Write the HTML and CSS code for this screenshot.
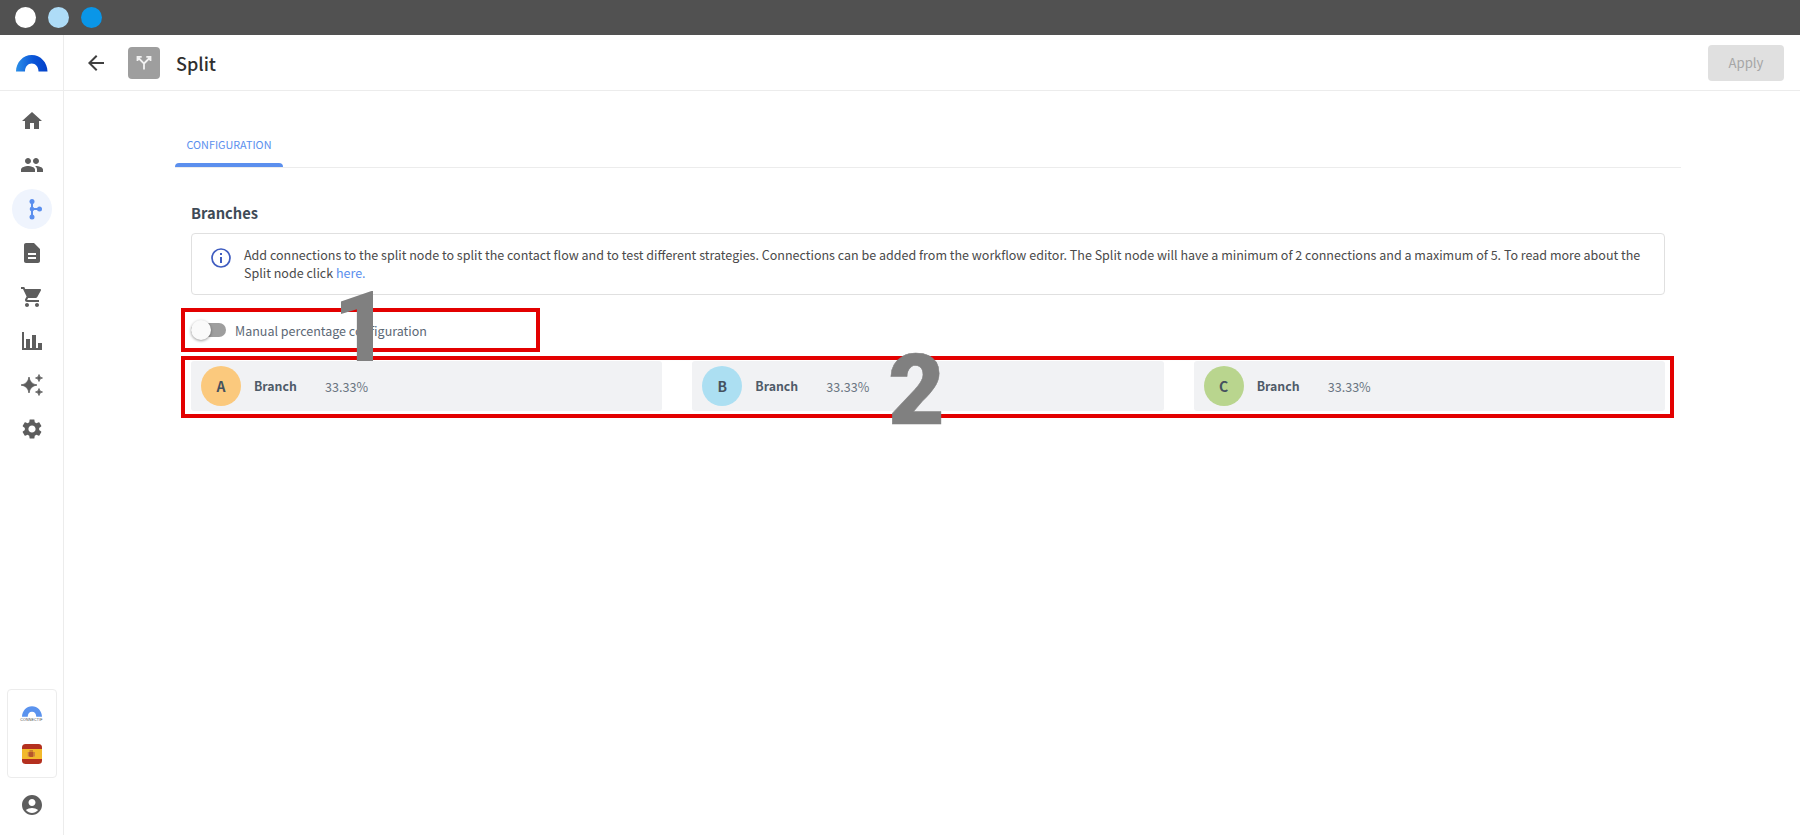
FILE: index.html
```html
<!DOCTYPE html>
<html lang="en">
<head>
<meta charset="utf-8">
<title>Split</title>
<link rel="stylesheet" href="styles.css">
</head>
<body>
<div class="titlebar">
  <span class="dot dot-white"></span>
  <span class="dot dot-light"></span>
  <span class="dot dot-blue"></span>
</div>
<div class="app">
  <aside class="sidebar">
    <div class="logo-cell">
      <svg class="logo" width="32" height="17" viewBox="0 0 32 17">
        <defs><linearGradient id="lg" x1="0" x2="1" y1="0" y2="0"><stop offset="0" stop-color="#2b8fe8"/><stop offset="0.55" stop-color="#0a55d8"/><stop offset="1" stop-color="#0340c8"/></linearGradient></defs>
        <path fill="url(#lg)" d="M0 16.500C0 7.500 7 0 15.750 0S31.500 7.500 31.500 16.500H22.500C22.500 11.500 19.500 8.500 15.750 8.500S9 11.500 9 16.500Z"/>
      </svg>
    </div>
    <nav class="nav">
      <a class="nav-item"><svg class="ico" viewBox="0 0 24 24"><path d="M10 20v-6h4v6h5v-8h3L12 3 2 12h3v8z"/></svg></a>
      <a class="nav-item"><svg class="ico" viewBox="0 0 24 24"><path d="M16 11c1.66 0 2.99-1.34 2.99-3S17.66 5 16 5c-1.66 0-3 1.34-3 3s1.34 3 3 3zm-8 0c1.66 0 2.99-1.34 2.99-3S9.66 5 8 5C6.34 5 5 6.34 5 8s1.34 3 3 3zm0 2c-2.33 0-7 1.17-7 3.5V19h14v-2.5c0-2.33-4.67-3.5-7-3.5zm8 0c-.29 0-.62.02-.97.05 1.16.84 1.97 1.97 1.97 3.45V19h6v-2.5c0-2.33-4.67-3.5-7-3.5z"/></svg></a>
      <a class="nav-item nav-active"><svg class="ico-flow" width="24" height="24" viewBox="0 0 24 24"><path class="flow-line" d="M12 4.500v15.500M12 12h7.500"/><circle class="flow-dot" cx="12" cy="4.500" r="2.500"/><circle class="flow-dot" cx="12" cy="12" r="2.300"/><circle class="flow-dot" cx="12" cy="20" r="2.500"/><circle class="flow-dot" cx="19.500" cy="12" r="2.500"/></svg></a>
      <a class="nav-item"><svg class="ico" viewBox="0 0 24 24"><path d="M14 2H6c-1.100 0-1.990.9-1.990 2L4 20c0 1.100.89 2 1.990 2H18c1.100 0 2-.9 2-2V8l-6-6zm2 16H8v-2h8v2zm0-4H8v-2h8v2z"/></svg></a>
      <a class="nav-item"><svg class="ico" viewBox="0 0 24 24"><path d="M7 18c-1.100 0-1.990.9-1.990 2S5.900 22 7 22s2-.9 2-2-.9-2-2-2zM1 2v2h2l3.600 7.590-1.350 2.450c-.16.28-.25.61-.25.96 0 1.100.9 2 2 2h12v-2H7.420c-.14 0-.25-.11-.25-.25l.03-.12.9-1.630h7.450c.75 0 1.410-.41 1.750-1.030l3.580-6.490c.08-.14.12-.31.12-.48 0-.55-.45-1-1-1H5.210l-.94-2H1zm16 16c-1.100 0-1.990.9-1.990 2s.89 2 1.990 2 2-.9 2-2-.9-2-2-2z"/></svg></a>
      <a class="nav-item"><svg class="ico" viewBox="0 0 24 24"><path d="M2 3h2v16h18v2H2zM6 10h4v9H6zM12 6h4v13h-4zM18 14h4v5h-4z"/></svg></a>
      <a class="nav-item"><svg class="ico" viewBox="0 0 24 24"><path d="M9 4Q10 11 17 12Q10 13 9 20Q8 13 1 12Q8 11 9 4zM19 1.500Q19.300 4.700 22.500 5Q19.300 5.300 19 8.500Q18.700 5.300 15.500 5Q18.700 4.700 19 1.500zM19 15.500Q19.300 18.700 22.500 19Q19.300 19.300 19 22.500Q18.700 19.300 15.500 19Q18.700 18.700 19 15.500z" stroke="#5d5d5d" stroke-width="0.8" stroke-linejoin="round"/></svg></a>
      <a class="nav-item"><svg class="ico" viewBox="0 0 24 24"><path d="M19.140 12.940c.04-.3.06-.61.06-.94 0-.32-.02-.64-.07-.94l2.030-1.580c.18-.14.23-.41.12-.61l-1.920-3.320c-.12-.22-.37-.29-.59-.22l-2.390.96c-.5-.38-1.030-.7-1.620-.94l-.36-2.540c-.04-.24-.24-.41-.48-.41h-3.840c-.24 0-.43.17-.47.41l-.36 2.540c-.59.24-1.130.57-1.620.94l-2.390-.96c-.22-.08-.47 0-.59.22L2.740 8.870c-.12.21-.08.47.12.61l2.030 1.580c-.05.3-.09.63-.09.94s.02.64.07.94l-2.030 1.580c-.18.14-.23.41-.12.61l1.920 3.320c.12.22.37.29.59.22l2.390-.96c.5.38 1.030.7 1.620.94l.36 2.540c.05.24.24.41.48.41h3.840c.24 0 .44-.17.47-.41l.36-2.540c.59-.24 1.130-.56 1.620-.94l2.390.96c.22.08.47 0 .59-.22l1.920-3.320c.12-.22.07-.47-.12-.61l-2.010-1.580zM12 15.600c-1.980 0-3.600-1.620-3.600-3.600s1.620-3.600 3.600-3.600 3.600 1.620 3.600 3.600-1.620 3.600-3.600 3.600z"/></svg></a>
    </nav>
    <div class="side-bottom">
      <div class="side-card">
        <div class="brand">
          <svg width="20" height="11" viewBox="0 0 31.500 16.500"><path fill="#5b93ee" d="M0 16.500C0 7.500 7 0 15.750 0S31.500 7.500 31.500 16.500H22.500C22.500 11.500 19.500 8.500 15.750 8.500S9 11.500 9 16.500Z"/></svg>
          <span class="brand-name">CONNECTIF</span>
        </div>
        <svg class="flag" width="20" height="20" viewBox="0 0 20 20"><rect width="20" height="20" rx="3.500" fill="#b4301f"/><rect y="5" width="20" height="10" fill="#f2b92b"/><rect x="7" y="7.500" width="4.500" height="5.500" rx="1" fill="#b5562a"/><rect x="7.500" y="6" width="3.500" height="1.500" fill="#c9802f"/><rect x="5.800" y="8" width="1" height="4.500" fill="#c0714a"/><rect x="11.700" y="8" width="1" height="4.500" fill="#c0714a"/></svg>
      </div>
      <svg class="ico user" viewBox="0 0 24 24"><path d="M12 2C6.480 2 2 6.480 2 12s4.480 10 10 10 10-4.480 10-10S17.520 2 12 2zm0 4c1.930 0 3.500 1.570 3.500 3.500S13.930 13 12 13s-3.500-1.570-3.500-3.500S10.070 6 12 6zm0 14c-2.030 0-4.430-.820-6.140-2.880C7.550 15.800 9.680 15 12 15s4.450.8 6.140 2.120C16.430 19.180 14.030 20 12 20z"/></svg>
    </div>
  </aside>
  <div class="main">
    <header class="topbar">
      <svg class="back" width="24" height="24" viewBox="0 0 24 24"><path d="M20 11H7.830l5.590-5.590L12 4l-8 8 8 8 1.410-1.410L7.830 13H20z"/></svg>
      <span class="node-icon">
        <svg width="20" height="20" viewBox="0 0 20 20"><path class="split-line" d="M10 16.500v-6L4.500 5M10 10.500L15.500 5M3.500 8V3.800h4.200M16.500 8V3.800h-4.200"/></svg>
      </span>
      <h1 class="title">Split</h1>
      <button class="apply" type="button">Apply</button>
    </header>
    <section class="content">
      <div class="tabs"><div class="tab">CONFIGURATION</div></div>
      <div class="panel">
        <h2 class="heading">Branches</h2>
        <div class="info">
          <svg class="info-ico" width="24" height="24" viewBox="0 0 24 24"><circle cx="12" cy="12" r="9" class="info-ring"/><path class="info-mark" d="M11 11h2v6h-2zM11 7h2v2h-2z"/></svg>
          <p class="info-text">Add connections to the split node to split the contact flow and to test different strategies. Connections can be added from the workflow editor. The Split node will have a minimum of 2 connections and a maximum of 5. To read more about the Split node click <a class="link">here.</a></p>
        </div>
        <div class="toggle-row">
          <span class="switch"><span class="thumb"></span></span>
          <span class="toggle-label">Manual percentage configuration</span>
        </div>
        <div class="branches">
          <div class="branch"><span class="avatar av-a">A</span><span class="branch-name">Branch</span><span class="pct">33.33%</span></div>
          <div class="branch"><span class="avatar av-b">B</span><span class="branch-name">Branch</span><span class="pct">33.33%</span></div>
          <div class="branch"><span class="avatar av-c">C</span><span class="branch-name">Branch</span><span class="pct">33.33%</span></div>
        </div>
      </div>
    </section>
  </div>
</div>
<div class="mark mark-1"></div>
<div class="mark mark-2"></div>
<span class="num num-1">1</span>
<span class="num num-2">2</span>
</body>
</html>
```

FILE: styles.css
```css
* { box-sizing: border-box; }
html, body { margin: 0; height: 100%; }
body { position: relative; width: 1800px; height: 835px; overflow: hidden; background: #fff; font-family: "Noto Sans CJK JP", "Noto Sans", sans-serif; color: #3e4a56; }

.titlebar { height: 35px; background: #515151; display: flex; align-items: center; gap: 12px; padding: 0 0 0 15px; }
.dot { width: 21px; height: 21px; border-radius: 50%; }
.dot-white { background: #fff; }
.dot-light { background: #aedcf7; }
.dot-blue { background: #0a96e8; }

.app { display: flex; height: 800px; }

.sidebar { width: 64px; border-right: 1px solid #ececec; display: flex; flex-direction: column; align-items: center; }
.logo-cell { height: 56px; width: 63px; border-bottom: 1px solid #ececec; display: flex; justify-content: center; padding-top: 20px; }
.logo { display: block; }
.nav { display: flex; flex-direction: column; align-items: center; gap: 4px; padding-top: 10px; }
.nav-item { width: 40px; height: 40px; border-radius: 50%; display: flex; align-items: center; justify-content: center; }
.ico { width: 24px; height: 24px; fill: #5d5d5d; display: block; }
.nav-active { background: #eff4fd; }
.flow-line { fill: none; stroke: #5b8fee; stroke-width: 2; }
.flow-dot { fill: #5b8fee; }

.side-bottom { margin-top: auto; display: flex; flex-direction: column; align-items: center; padding-bottom: 18px; gap: 15px; }
.side-card { width: 50px; height: 89px; border: 1px solid #ececec; border-radius: 4px; display: flex; flex-direction: column; align-items: center; padding-top: 16px; gap: 20px; }
.brand { display: flex; flex-direction: column; align-items: center; gap: 1px; height: 18px; }
.brand svg { display: block; }
.brand-name { font-size: 3.600px; line-height: 5px; letter-spacing: 0.15px; color: #444; font-family: "Liberation Sans", sans-serif; }
.flag { display: block; }

.main { flex: 1; display: flex; flex-direction: column; min-width: 0; }
.topbar { height: 56px; border-bottom: 1px solid #ececec; display: flex; align-items: center; padding: 0 16px 0 20px; flex: none; }
.back { fill: #3f3f3f; display: block; }
.node-icon { width: 32px; height: 32px; margin-left: 20px; background: #9e9e9e; border-radius: 4px; display: flex; align-items: center; justify-content: center; }
.split-line { fill: none; stroke: #f2f2f2; stroke-width: 1.800; }
.title { font-size: 18px; font-weight: 500; color: #2f2f2f; margin: 0 0 0 16px; line-height: 28px; }
.apply { margin-left: auto; width: 76px; height: 36px; border: 0; border-radius: 4px; background: #e0e0e0; color: #a6a6a6; font: 400 13.200px "Noto Sans CJK JP", sans-serif; padding: 0; }

.content { padding: 0 119px 0 111px; flex: 1; }
.tabs { margin-top: 36px; height: 41px; border-bottom: 1px solid #ececec; display: flex; }
.tab { position: relative; width: 108px; height: 40px; text-align: center; font-size: 10.800px; line-height: 19px; padding-top: 8px; color: #5b8fee; }
.tab::after { content: ""; position: absolute; left: 0; right: 0; bottom: 0; height: 4px; background: #5b8fee; border-radius: 4px 4px 0 0; }
.panel { padding: 0 16px; }
.heading { font-size: 14.700px; font-weight: 700; color: #3e4a56; margin: 33px 0 0; line-height: 24px; }
.info { margin-top: 8px; height: 62px; border: 1px solid #e0e0e0; border-radius: 4px; display: flex; padding: 12px 20px 0 17px; }
.info-ico { flex: none; margin-top: 0; }
.info-ring { fill: none; stroke: #3f5cc0; stroke-width: 1.700; }
.info-mark { fill: #3f5cc0; }
.info-text { margin: 0 0 0 11px; font-size: 12.530px; line-height: 18px; color: #4a4a4a; }
.link { color: #5b8fee; }
.toggle-row { display: flex; align-items: center; height: 36px; margin-top: 17px; }
.switch { position: relative; width: 35px; height: 14px; background: #9e9e9e; border-radius: 7px; flex: none; }
.thumb { position: absolute; left: 0; top: -3px; width: 20px; height: 20px; border-radius: 50%; background: #fafafa; box-shadow: 0 1px 3px rgba(0,0,0,.4); }
.toggle-label { margin-left: 9px; font-size: 12.500px; color: #5c6875; }
.branches { display: grid; grid-template-columns: repeat(3, 1fr); gap: 30px; margin-top: 13px; }
.branch { height: 50px; background: #f1f2f4; border-radius: 3px; display: flex; align-items: center; padding-left: 10px; }
.avatar { width: 40px; height: 40px; border-radius: 50%; display: flex; align-items: center; justify-content: center; font-size: 14px; font-weight: 700; color: #45515e; flex: none; }
.av-a { background: #fbc97d; }
.av-b { background: #acdff2; }
.av-c { background: #b9d58e; }
.branch-name { margin-left: 13px; font-size: 12.300px; font-weight: 700; color: #4f5b68; width: 71px; }
.pct { font-size: 12.600px; color: #6b7682; }

.mark { position: absolute; border: 4px solid #e30000; }
.mark-1 { left: 181px; top: 308px; width: 359px; height: 44px; }
.mark-2 { left: 181px; top: 356px; width: 1493px; height: 62px; }
.num { position: absolute; font-family: "Roboto", sans-serif; font-weight: 900; font-size: 98px; line-height: 98px; color: #808080; }
.num-1 { left: 333px; top: 279px; }
.num-2 { left: 888px; top: 342px; -webkit-text-stroke: 0.5px #808080; }
```
